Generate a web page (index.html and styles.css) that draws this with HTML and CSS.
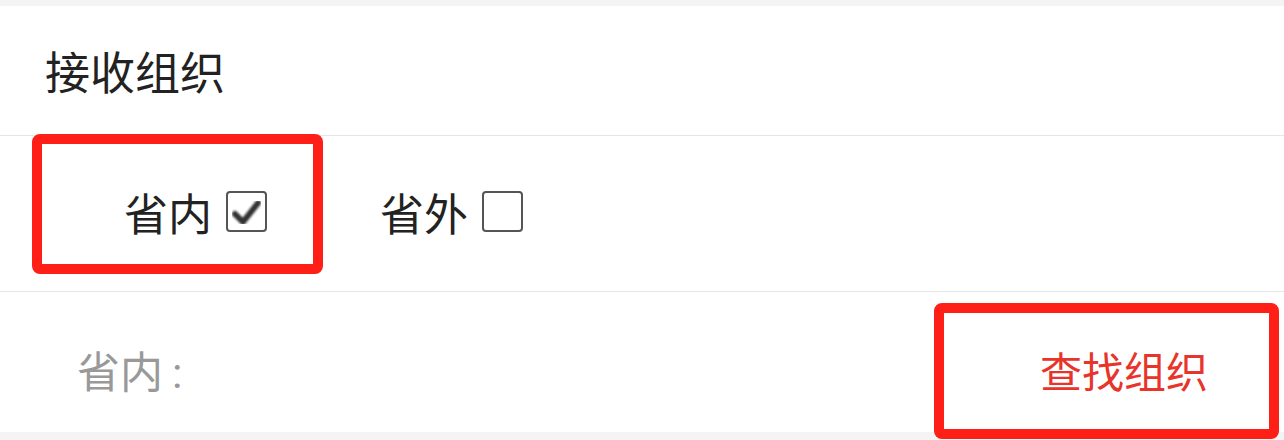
FILE: index.html
```html
<!DOCTYPE html>
<html lang="zh">
<head>
<meta charset="utf-8">
<link rel="stylesheet" href="styles.css">
</head>
<body>
<div class="page">
  <div class="header">接收组织</div>
  <div class="options">
    <label class="opt opt-in">省内
      <span class="box checked">
        <svg viewBox="0 0 40 40" width="40" height="40"><defs><filter id="blur"><feGaussianBlur stdDeviation="1.3"/></filter></defs><path d="M8 22 L16 30 L31 11" fill="none" stroke="#333" stroke-width="6" stroke-linecap="round" stroke-linejoin="round" filter="url(#blur)"/></svg>
      </span>
    </label>
    <label class="opt opt-out">省外 <span class="box"></span></label>
  </div>
  <div class="search">
    <span class="label">省内<span class="colon">:</span></span>
    <span class="find">查找组织</span>
  </div>
  <div class="mark mark-1"></div>
  <div class="mark mark-2"></div>
</div>
</body>
</html>
```
FILE: styles.css
```css
html, body {
  margin: 0;
  padding: 0;
  background: #f4f4f4;
  font-family: "Noto Sans CJK SC", "Noto Sans", sans-serif;
}
.page {
  position: relative;
  width: 1284px;
  height: 440px;
  padding-top: 6px;
  box-sizing: border-box;
}
.header {
  height: 130px;
  background: #fff;
  display: flex;
  align-items: center;
  padding-left: 45px;
  font-size: 45px;
  color: #222;
  border-bottom: 1px solid #e6e6e6;
  box-sizing: border-box;
}
.options {
  height: 156px;
  background: #fff;
  display: flex;
  align-items: center;
  padding-left: 124px;
  font-size: 44px;
  color: #222;
  border-bottom: 1px solid #e6e6e6;
  box-sizing: border-box;
  padding-bottom: 4px;
}
.opt {
  display: flex;
  align-items: center;
  gap: 14px;
}
.opt-out {
  margin-left: 113px;
}
.box {
  width: 41px;
  height: 41px;
  border: 2px solid #555;
  border-radius: 4px;
  box-sizing: border-box;
  display: flex;
  align-items: center;
  justify-content: center;
  overflow: hidden;
}
.box svg {
  display: block;
  flex: none;
}
.search {
  height: 140px;
  background: #fff;
  display: flex;
  align-items: center;
  justify-content: space-between;
  padding: 14px 76px 0 77px;
  box-sizing: border-box;
  font-size: 43px;
}
.label {
  color: #999;
}
.colon {
  font-family: Roboto, sans-serif;
  margin-left: 9px;
}
.find {
  color: #e8342a;
  font-size: 42px;
}
.mark {
  position: absolute;
  border: 10px solid #fe1f16;
  border-radius: 8px;
  box-sizing: border-box;
}
.mark-1 {
  left: 32px;
  top: 134px;
  width: 291px;
  height: 140px;
}
.mark-2 {
  left: 934px;
  top: 303px;
  width: 345px;
  height: 136px;
}
```
